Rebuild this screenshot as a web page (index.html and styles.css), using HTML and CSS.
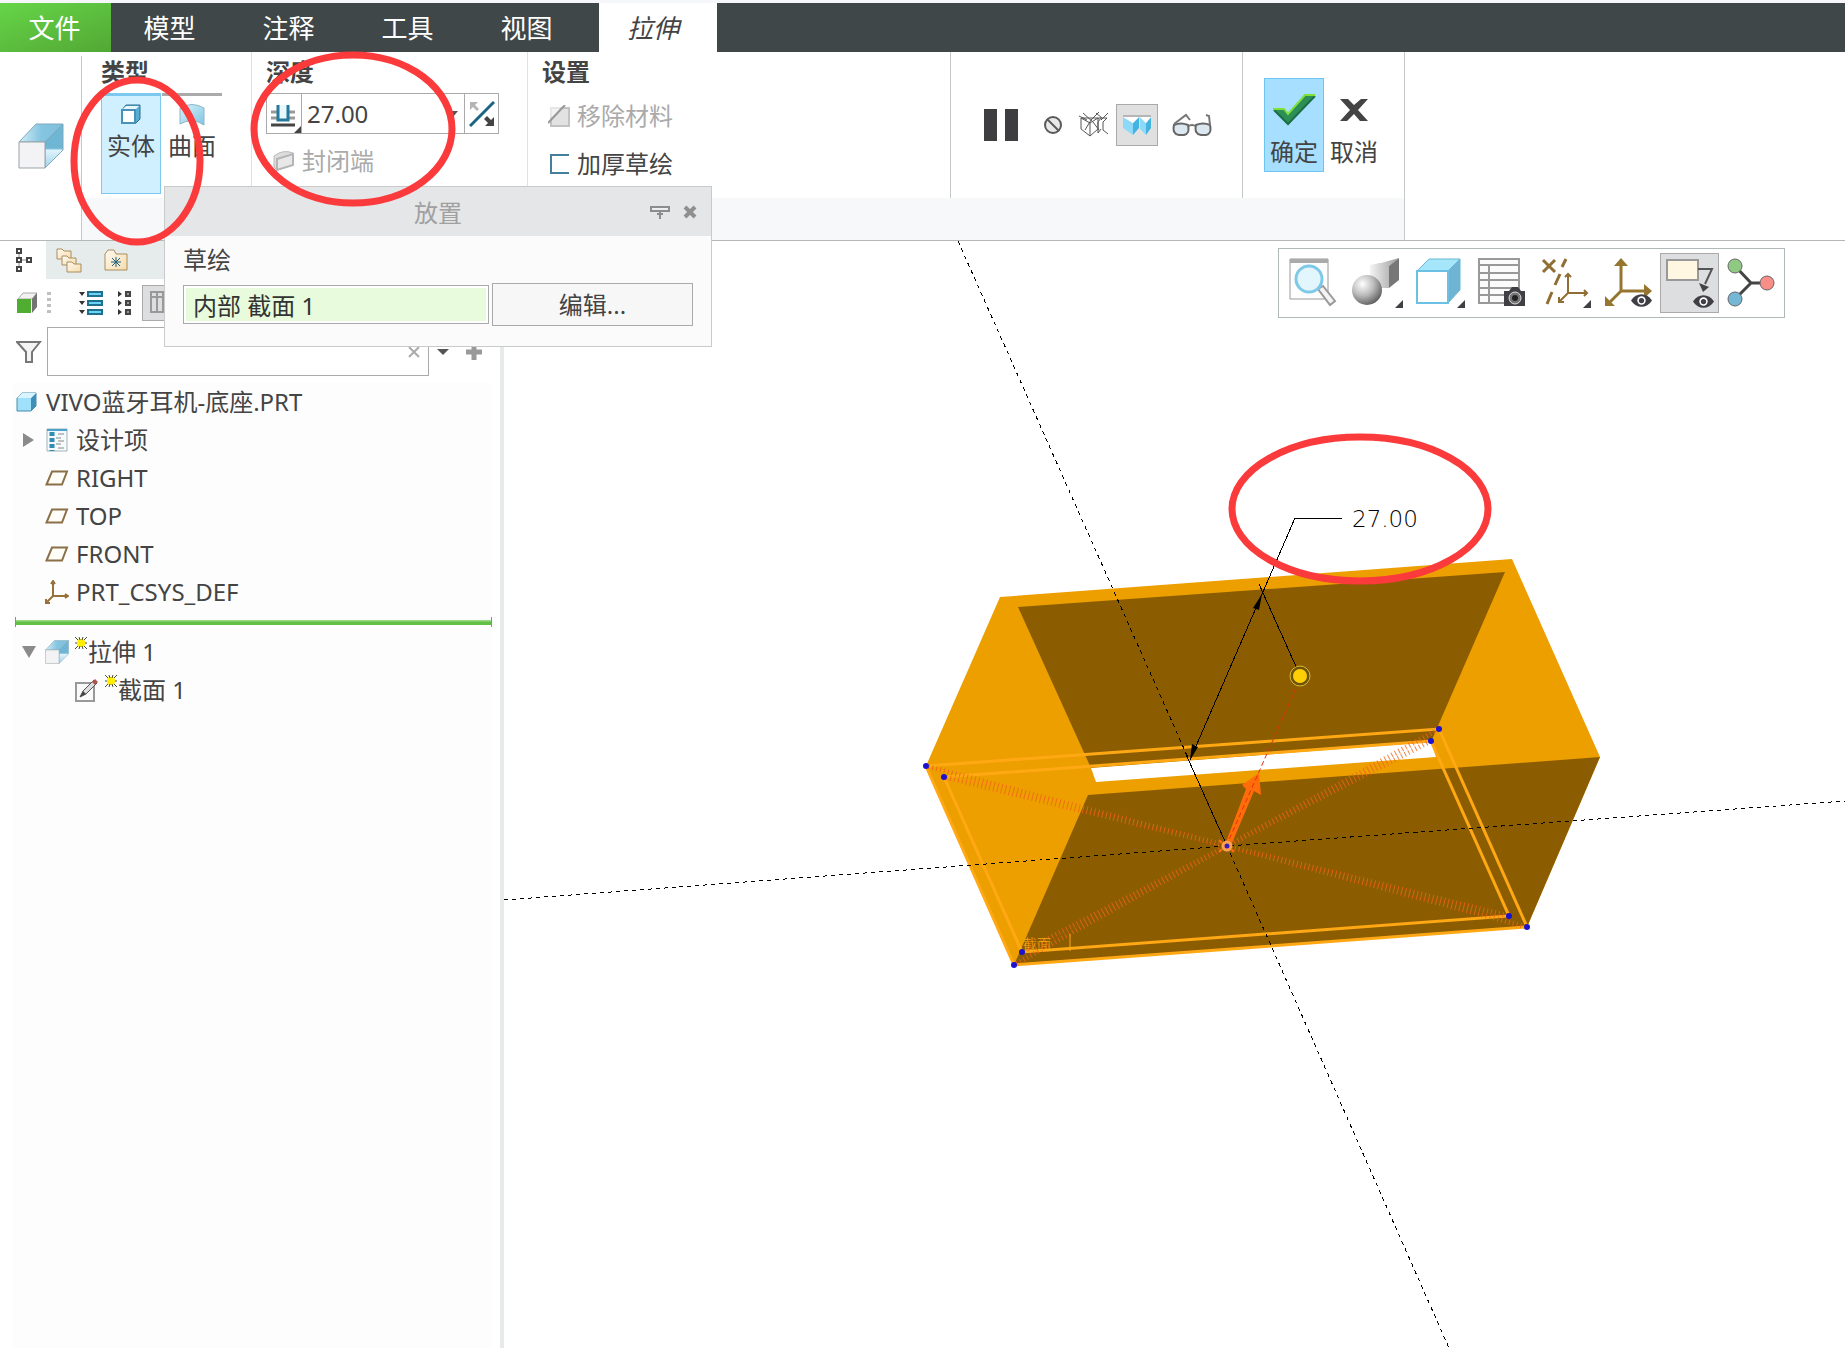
FILE: index.html
```html
<!DOCTYPE html>
<html lang="zh-CN">
<head>
<meta charset="utf-8">
<meta name="viewport" content="width=device-width, initial-scale=1">
<title>VIVO蓝牙耳机-底座.PRT</title>
<link rel="stylesheet" href="styles.css">
</head>
<body>
<svg class="defs" aria-hidden="true">
  <defs>
    <linearGradient id="gBlue" x1="0" y1="0" x2="1" y2="1"><stop offset="0" stop-color="#d9f3fd"/><stop offset="1" stop-color="#7fc4e2"/></linearGradient>
    <linearGradient id="gFolder" x1="0" y1="0" x2="1" y2="1"><stop offset="0" stop-color="#fffaf0"/><stop offset="1" stop-color="#f6dcae"/></linearGradient>
    <linearGradient id="gTop" x1="0" y1="0" x2="1" y2="0"><stop offset="0" stop-color="#d3edf7"/><stop offset=".5" stop-color="#86c5e0"/><stop offset="1" stop-color="#7fc0dc"/></linearGradient>
    <linearGradient id="gSide" x1="0" y1="0" x2="0" y2="1"><stop offset="0" stop-color="#6fb6d5"/><stop offset=".55" stop-color="#6fb6d5"/><stop offset=".6" stop-color="#dff3fb"/><stop offset="1" stop-color="#9fd3ea"/></linearGradient>
    <radialGradient id="gBall" cx=".35" cy=".3" r=".75"><stop offset="0" stop-color="#fff"/><stop offset=".5" stop-color="#bcbcbc"/><stop offset="1" stop-color="#5c5c5c"/></radialGradient>
    <linearGradient id="gGrey" x1="0" y1="0" x2="1" y2="0"><stop offset="0" stop-color="#f4f4f4"/><stop offset="1" stop-color="#9a9a9a"/></linearGradient>
    <symbol id="extrude" viewBox="0 0 46 46">
      <path d="M1 19 18 1H45L27 19Z" fill="url(#gTop)" stroke="#7fa9bb"/>
      <path d="M45 1V27L27 45V19Z" fill="url(#gSide)" stroke="#7fa9bb"/>
      <path d="M1 19H27V45H1Z" fill="#f3f3f5" stroke="#9aa3a8"/>
    </symbol>
    <symbol id="spark" viewBox="0 0 12 12">
      <path d="M3 3 9 9M9 3 3 9M6 2V10M2 6H10" stroke="#ffee00" stroke-width="3"/>
      <path d="M0 0 3 3M12 0 9 3M0 12 3 9M12 12 9 9M4 0 5 3M8 0 7 3M4 12 5 9M8 12 7 9M0 6H2M10 6H12" stroke="#4a4a30"/>
    </symbol>
    <symbol id="plane" viewBox="0 0 24 16">
      <path d="M7 1.500H22L17 14.500H1.500Z" fill="#fffdf8" stroke="#8b6f47" stroke-width="2"/>
    </symbol>
    <symbol id="eye" viewBox="0 0 20 12">
      <path d="M0 6C5-2 15-2 20 6 15 14 5 14 0 6Z" fill="#3f3f44"/><circle cx="10" cy="6" r="4" fill="#fff"/><circle cx="10" cy="6" r="2.500" fill="#3f3f44"/>
    </symbol>
  </defs>
</svg>

<nav class="tabs">
  <button class="tab file">文件</button>
  <button class="tab">模型</button>
  <button class="tab">注释</button>
  <button class="tab">工具</button>
  <button class="tab">视图</button>
  <button class="tab active">拉伸</button>
</nav>

<header class="ribbon">
  <div class="feature"><svg width="46" height="46"><use href="#extrude"/></svg></div>
  <div class="panel">
    <div class="groups">
      <section class="group type">
        <h2>类型</h2>
        <div class="choices">
          <button class="choice on">
            <svg width="22" height="20"><path d="M2 6 6 1H20V15L16 19H2Z" fill="#58aed4" stroke="#2c6f92"/><path d="M2 6 6 2H19L15 6Z" fill="#e8f7fd"/><path d="M2 6H15V19H2Z" fill="#fff" stroke="#4792b6" stroke-width="2"/></svg>
            实体
          </button>
          <button class="choice">
            <svg width="26" height="22"><path d="M1 4Q13-3 25 4V21Q13 13 1 20Z" fill="url(#gBlue)" stroke="#8cb6c6"/></svg>
            曲面
          </button>
        </div>
      </section>
      <section class="group depth">
        <h2>深度</h2>
        <div class="combo">
          <button class="mode" aria-label="深度选项"><svg width="34" height="38"><path d="M4 17H28M4 23H28" stroke="#9a9a9a" stroke-width="3"/><path d="M11 10V25H21V10" fill="#e8f8fd" stroke="#25799c" stroke-width="3"/><path d="M4 30H28" stroke="#444" stroke-width="3"/><path d="M34 31V38H27Z" fill="#444"/></svg></button>
          <input type="text" value="27.00" aria-label="深度">
          <button class="drop" aria-label="下拉"><svg width="10" height="6"><path d="M0 0H10L5 6Z" fill="#555"/></svg></button>
          <button class="flip" aria-label="反向"><svg width="26" height="26"><path d="M1 25 25 1" stroke="#1c6483" stroke-width="3"/><path d="M1 1H9L6 4 10 8 8 10 4 6 1 9Z" fill="#b5b5b5"/><path d="M25 25H16L19 22 15 18 18 15 22 19 25 16Z" fill="#444"/></svg></button>
        </div>
        <button class="line muted cap"><svg width="22" height="22"><path d="M1 6Q10-1 20 3V15L4 20 1 17Z" fill="#ddd" stroke="#bbb"/><path d="M4 9 20 4V15L4 20Z" fill="#e8e8e8" stroke="#b5b5b5" stroke-width="2"/></svg>封闭端</button>
      </section>
      <section class="group settings">
        <h2>设置</h2>
        <button class="line muted remove"><svg width="22" height="22"><path d="M3 3H21V21H3Z" fill="#e2e2e2" stroke="#c2c2c2" stroke-width="2"/><path d="M0 0H15L0 16Z" fill="#fff" opacity=".6"/><path d="M0 18 17 0" stroke="#999" stroke-width="2"/></svg>移除材料</button>
        <button class="line thicken"><svg width="22" height="22"><path d="M21 2H3V20H21" fill="none" stroke="#457f9e" stroke-width="2"/></svg>加厚草绘</button>
      </section>
      <section class="group tools">
        <button aria-label="暂停"><svg width="36" height="32"><path d="M1 0H14V32H1ZM22 0H35V32H22Z" fill="#3e3e40"/></svg></button>
        <button aria-label="无预览"><svg width="20" height="20"><circle cx="10" cy="10" r="8" fill="#e9e9e9" stroke="#5a5a5a" stroke-width="2"/><path d="M4 4 16 16" stroke="#5a5a5a" stroke-width="2"/></svg></button>
        <button aria-label="分离"><svg width="30" height="26"><path d="M2 6 11 11 11 24 2 17ZM11 11 19 6V17L11 24M2 6H28M22 6 19 10V21L22 17M0 4 8 8M20 0 12 8 6 18M4 1 14 10 20 18M28 6 24 10V18L29 22M17 1 23 6M29 1 22 8" fill="none" stroke="#555"/></svg></button>
        <button class="pressed" aria-label="已附加"><svg width="30" height="22"><path d="M1 3 11 9V21L1 14Z" fill="#8ddaf8"/><path d="M11 9 17 3V14L11 21Z" fill="#45b3df"/><path d="M1 3H17L11 9Z" fill="#fff"/><path d="M18 3 24 9V21L18 15Z" fill="#8ddaf8"/><path d="M24 9 29 3V14L24 21Z" fill="#45b3df"/><path d="M18 3H29L24 9Z" fill="#fff"/><path d="M1 2H29" stroke="#8b8b8b"/></svg></button>
        <button aria-label="预览"><svg width="40" height="24"><path d="M2 12Q9 9 16 12 18 21 12 22H7Q0 21 2 12ZM24 12Q31 9 38 12 40 21 34 22H29Q22 21 24 12Z" fill="#dce8ef" stroke="#666" stroke-width="2"/><path d="M17 13Q20 11 23 13M2 11 14 2 18 7M38 12 37 3 34 2" fill="none" stroke="#777" stroke-width="2"/></svg></button>
      </section>
      <section class="group confirm">
        <button class="ok"><svg width="44" height="32"><path d="M1 15H12L16 20 33 1H43L16 31Z" fill="#2c8f55"/><path d="M2 16 16 30 43 2" fill="none" stroke="#1d6e46" stroke-width="2"/><path d="M1 15H12L16 20 33 1H43" fill="none" stroke="#7fe03a" stroke-width="2"/></svg>确定</button>
        <button class="cancel"><svg width="30" height="32"><path d="M1 5H9L15 11 22 5H29L19 16 29 27H21L15 20 8 27H1L11 16Z" fill="#444"/></svg>取消</button>
      </section>
    </div>
  </div>

  <svg class="marks" width="470" height="250" aria-hidden="true">
    <ellipse cx="137" cy="161" rx="63" ry="81"/>
    <ellipse cx="353" cy="129" rx="99" ry="74"/>
  </svg>

  <section class="placement">
    <div class="title"><h3>放置</h3>
      <button aria-label="固定"><svg width="20" height="16"><path d="M1 3H19V7H1Z" fill="#eee" stroke="#8d8d8d" stroke-width="2"/><path d="M10 7V15M7 10H13" stroke="#8d8d8d" stroke-width="2"/></svg></button>
      <button aria-label="关闭"><svg width="14" height="14"><path d="M2 2 12 12M12 2 2 12" stroke="#8f8f8f" stroke-width="4"/></svg></button>
    </div>
    <div class="content">
      <label for="sketch">草绘</label>
      <div class="pick"><input id="sketch" type="text" value="内部 截面 1" readonly><button>编辑...</button></div>
    </div>
  </section>
</header>

<div class="workspace">
  <aside class="sidebar">
    <div class="side-tabs">
      <button class="here" aria-label="模型树"><svg width="18" height="26"><path d="M2 2H6V6H2ZM2 11H6V15H2ZM2 20H6V24H2ZM12 11H16V15H12Z" fill="none" stroke="#444" stroke-width="2"/><path d="M4 7V10M4 16V19M7 13H11" stroke="#888"/></svg></button>
      <button aria-label="文件夹"><svg width="26" height="26"><g fill="url(#gFolder)" stroke="#a98d5d"><path d="M1 4V2H6L8 4H15V12H1Z"/><path d="M6 11V9H11L13 11H20V18H6Z"/><path d="M11 17V15H16L18 17H25V25H11Z"/></g></svg></button>
      <button aria-label="收藏夹"><svg width="24" height="24"><path d="M1 6 4 2H10L12 6H23V22H1Z" fill="url(#gFolder)" stroke="#a98d5d"/><path d="M12 9V19M7 14H17M8 10 16 18M16 10 8 18" stroke="#1e5f7e"/></svg></button>
    </div>
    <div class="side-tools">
      <button aria-label="显示"><svg width="20" height="22"><path d="M1 7 6 1H20L15 7Z" fill="#f2f2f2" stroke="#aaa"/><path d="M15 7 20 1V15L15 21Z" fill="#747474"/><path d="M0 7H14V21H0Z" fill="#4fae32"/></svg></button>
      <svg width="4" height="24"><path d="M2 1V24" stroke="#c0c0c0" stroke-width="4" stroke-dasharray="3 3"/></svg>
      <button aria-label="全部展开"><svg width="24" height="26"><path d="M0 2H6L3 6ZM0 11H6L3 15ZM0 20H6L3 24Z" fill="#333"/><path d="M9 2H23V6H9ZM9 11H23V15H9ZM9 20H23V24H9Z" fill="#6bd3f5" stroke="#1f708f" stroke-width="2"/></svg></button>
      <button aria-label="全部折叠"><svg width="14" height="26"><path d="M0 1 4 4 0 7ZM0 10 4 13 0 16ZM0 19 4 22 0 25Z" fill="#333"/><path d="M8 2H12V6H8ZM8 11H12V15H8ZM8 20H12V24H8Z" fill="#999" stroke="#444" stroke-width="2"/></svg></button>
      <button class="columns" aria-label="树列"><svg width="24" height="24"><path d="M1 1H23V21H1ZM1 6H23M7 1V21M13 1V21" fill="none" stroke="#999" stroke-width="2"/></svg></button>
    </div>
    <div class="filter">
      <svg width="26" height="24"><path d="M1 2H24L16 12V22H10V12Z" fill="#f4f4f4" stroke="#777" stroke-width="2"/></svg>
      <div class="search"><input type="text" aria-label="过滤"><button aria-label="清除"><svg width="12" height="12"><path d="M1 1 11 11M11 1 1 11" stroke="#aaa" stroke-width="2"/></svg></button></div>
      <button aria-label="选项"><svg width="12" height="6"><path d="M0 0H12L6 6Z" fill="#555"/></svg></button>
      <button aria-label="添加"><svg width="18" height="18"><path d="M9 1V17M1 9H17" stroke="#999" stroke-width="5"/></svg></button>
    </div>
    <div class="tree">
      <ul>
        <li class="l0"><svg width="22" height="20"><path d="M1 6 6 1H20V14L15 19H1Z" fill="#9fe0fa" stroke="#4b8cab"/><path d="M15 6 20 1V14L15 19Z" fill="#3d8fb8"/><path d="M1 6 6 1H20L15 6Z" fill="#d8f4fe"/></svg>VIVO蓝牙耳机-底座.PRT</li>
        <li class="l1"><svg class="arrow" width="12" height="14"><path d="M1 0 12 7 1 14Z" fill="#8b8b8b"/></svg><svg width="24" height="24"><path d="M2 1H22V23H2Z" fill="#f5fafc" stroke="#a5b2b8"/><path d="M2 2H22" stroke="#4ba3cc" stroke-width="2"/><path d="M7 4V23" stroke="#2f8db8" stroke-width="5" stroke-dasharray="4 2"/><path d="M13 6H19M11 10H16M13 13H19M11 16H16M13 20H19" stroke="#888"/></svg>设计项</li>
        <li class="l1"><svg width="24" height="16"><use href="#plane"/></svg>RIGHT</li>
        <li class="l1"><svg width="24" height="16"><use href="#plane"/></svg>TOP</li>
        <li class="l1"><svg width="24" height="16"><use href="#plane"/></svg>FRONT</li>
        <li class="l1"><svg width="24" height="24"><path d="M8 2V16H23M8 16 2 22M6 4 8 1 10 4M20 14 23 16 20 18M1 19V23H5" fill="none" stroke="#96713a" stroke-width="2"/></svg>PRT_CSYS_DEF</li>
      </ul>
      <div class="insert"></div>
      <ul>
        <li class="l1"><svg class="arrow" width="14" height="12"><path d="M0 0H14L7 12Z" fill="#8b8b8b"/></svg><svg width="24" height="24"><use href="#extrude"/></svg><svg class="spark" width="12" height="12"><use href="#spark"/></svg>拉伸 1</li>
        <li class="l2"><svg width="24" height="24"><path d="M1 5H19V23H1Z" fill="#fafafa" stroke="#999" stroke-width="2"/><path d="M5 19 8 13 19 2 22 5 11 16Z" fill="#ddd" stroke="#555"/><path d="M17 4 20 1 23 4 20 7Z" fill="#b1554a"/><path d="M5 19 8 13 11 16Z" fill="#444"/></svg><svg class="spark" width="12" height="12"><use href="#spark"/></svg>截面 1</li>
      </ul>
    </div>
  </aside>

  <main class="viewport">
    <svg class="model" viewBox="504 241 1341 1107" role="img" aria-label="拉伸预览">
      <path d="M1000 597 1512 559 1600 757 1527 927 1014 965 926 766Z" fill="#ed9f00"/>
      <path d="M1018 607 1505 572 1431 742 1091 768Z" fill="#8c5d00"/>
      <path d="M1091 768 1431 742 1436 757 1096 782Z" fill="#fff"/>
      <path d="M1088 795 1600 757 1527 927 1014 965Z" fill="#8c5d00"/>
      <g fill="none" stroke="#ffa814" stroke-width="3">
        <path d="M926 766 1439 729 1527 927 1014 965Z"/>
        <path d="M944 777 1431 741 1509 916 1022 952Z"/>
      </g>
      <g stroke="#f0641a" stroke-width="5" stroke-dasharray="1 3" opacity=".8">
        <path d="M1227 846 926 766M1227 846 944 777M1227 846 1439 729M1227 846 1431 741M1227 846 1527 927M1227 846 1509 916M1227 846 1014 965M1227 846 1022 952"/>
      </g>
      <g stroke="#000" fill="none" shape-rendering="crispEdges">
        <path d="M958 241 1189 760M1227 846 1449 1348M504 900 1227 846 1845 801" stroke-dasharray="4 4"/>
        <path d="M1185 752 1227 846M1342 518H1295L1190 760M1259 584 1298 671"/>
      </g>
      <path d="M1262 594 1253 608 1259 610ZM1190 760 1192 744 1198 747Z"/>
      <path d="M1226 842 1246 789 1242 785 1259 773 1261 795 1254 791 1232 843Z" fill="#ff6d0a"/>
      <path d="M1296 688 1228 842" stroke="#e03010" stroke-dasharray="5 3"/>
      <circle cx="1227" cy="846" r="4" fill="#3a20b0" stroke="#ffa050" stroke-width="3"/>
      <path d="M1219 840 1222 843M1219 852 1222 849M1234 852 1231 849" stroke="#ff6d0a" stroke-width="2"/>
      <circle cx="1300" cy="676" r="10" fill="#6d5310" stroke="#d9b928" stroke-width="1"/><circle cx="1300" cy="676" r="7" fill="#ffcf05"/>
      <g fill="#1a12d0"><circle cx="926" cy="766" r="3"/><circle cx="944" cy="777" r="3"/><circle cx="1439" cy="729" r="3"/><circle cx="1431" cy="741" r="3"/><circle cx="1527" cy="927" r="3"/><circle cx="1509" cy="916" r="3"/><circle cx="1014" cy="965" r="3"/><circle cx="1022" cy="952" r="3"/></g>
      <text class="section-name" x="1023" y="949">截面</text><path d="M1070 934V951" stroke="#ffa814"/>
      <text class="dimension" x="1352" y="527">27.00</text>
      <ellipse cx="1360" cy="509" rx="128" ry="72" fill="none" stroke="#fb3a3c" stroke-width="7"/>
    </svg>
    <div class="view-tools">
      <button aria-label="重新调整"><svg width="48" height="50"><path d="M1 1H39V41H1Z" fill="#fdfdfd" stroke="#999"/><path d="M1 3H39" stroke="#aaa" stroke-width="4"/><path d="M29 31 34 28 46 43 41 47Z" fill="#f4f4f4" stroke="#999" stroke-width="2"/><circle cx="20" cy="21" r="13" fill="#e3f6fd" stroke="#7fc9e8" stroke-width="3"/></svg></button>
      <button aria-label="渲染"><svg width="52" height="52"><path d="M18 9 28 6 37 9V31H18Z" fill="#ccc"/><path d="M18 8 29 6 47 1 37 9V31H18Z" fill="url(#gGrey)"/><path d="M37 9 47 1V23L37 31Z" fill="#777"/><circle cx="15" cy="33" r="15" fill="url(#gBall)"/><path d="M51 43V51H43Z" fill="#3f3f44"/></svg></button>
      <button aria-label="显示样式"><svg width="52" height="52"><path d="M2 14 14 2H45L33 14Z" fill="#a5e6fb" stroke="#6bb7d4"/><path d="M33 14 45 2V33L33 46Z" fill="#6fb4d2" stroke="#6bb7d4"/><path d="M2 14H33V46H2Z" fill="#fff" stroke="#6bc1e4" stroke-width="2"/><path d="M50 43V51H42Z" fill="#3f3f44"/></svg></button>
      <button aria-label="视图管理器"><svg width="48" height="50"><path d="M1 1H41V45H1ZM1 7H41M1 15H41M1 22H41M1 30H41M1 37H41M11 7V45" fill="#fbfbfc" stroke="#999" stroke-width="2"/><path d="M26 33H31L34 29H40L43 33H47V48H26Z" fill="#3f3f44"/><circle cx="37" cy="40" r="6" fill="#777" stroke="#ddd"/><circle cx="37" cy="40" r="3" fill="#222"/></svg></button>
      <button aria-label="基准显示"><svg width="52" height="52"><g fill="none" stroke="#8f6d33" stroke-width="3"><path d="M2 3 14 15M14 3 2 15M25 2 21 10M19 17 14 28M11 35 6 47"/><path d="M27 17V36H46M27 36 18 45M24 20 27 17 30 20M43 33 46 36 43 39M18 40V45H23" stroke-width="2"/></g><path d="M50 43V51H42Z" fill="#3f3f44"/></svg></button>
      <button aria-label="坐标系"><svg width="50" height="50"><path d="M17 6V33H42M17 33 5 45" fill="none" stroke="#96762f" stroke-width="3"/><path d="M10 8 17 0 24 8ZM40 26 48 33 40 40ZM1 38V48H11Z" fill="#96762f"/><use href="#eye" x="27" y="36" width="21" height="13"/></svg></button>
      <button class="pressed" aria-label="注释显示"><svg width="50" height="50"><path d="M2 2H33V22H2Z" fill="#fff7e2" stroke="#999" stroke-width="2"/><path d="M33 11H47L40 26" fill="none" stroke="#555" stroke-width="2"/><path d="M34 25 44 29 38 34Z" fill="#444"/><use href="#eye" x="28" y="37" width="21" height="13"/></svg></button>
      <button aria-label="旋转中心"><svg width="48" height="50"><path d="M8 8 24 25 8 41M24 25H40" fill="none" stroke="#444" stroke-width="3"/><g stroke="#666"><circle cx="8" cy="8" r="7" fill="#8fca83"/><circle cx="40" cy="25" r="7" fill="#f88e87"/><circle cx="8" cy="41" r="7" fill="#75b8d6"/></g></svg></button>
    </div>
  </main>
</div>
</body>
</html>
```

FILE: styles.css
```css
* { box-sizing: border-box; }
body {
  margin: 0;
  min-height: 100vh;
  display: flex;
  flex-direction: column;
  background: #fff;
  color: #444;
  font: 400 24px/32px "Noto Sans", "Noto Sans CJK SC", sans-serif;
}
svg { display: block; flex: none; }
h2, h3, ul { margin: 0; padding: 0; }
button, input { font: inherit; color: inherit; margin: 0; padding: 0; border: 0; background: none; border-radius: 0; }
.defs { position: absolute; width: 0; height: 0; }

/* Tab bar */
.tabs { display: flex; height: 52px; border-top: 3px solid #f5f7fa; background: #3f4748; }
.tab { width: 119px; padding: 1px 2px 0 0; color: #fff; font-size: 26px; }
.file { width: 111px; background: linear-gradient(160deg, #66d548, #52a834); }
.active { margin-left: 12px; width: 118px; padding-right: 10px; background: #fff; color: #444; font-style: italic; }

/* Ribbon */
.ribbon { position: relative; display: flex; height: 189px; border-bottom: 1px solid #b4b8b9; }
.feature { display: flex; justify-content: center; align-items: center; width: 82px; margin-top: 4px; border-right: 1px solid #c4c8c9; }
.feature svg { margin-bottom: 4px; }
.panel { background: #f6f8fa; border-right: 1px solid #c4c8c9; }
.groups { display: flex; height: 146px; background: #fff; }
.group { display: flex; flex-direction: column; padding: 4px 0 0 14px; border-right: 1px solid #dfe2e3; }
.group h2 { font-size: 24px; line-height: 32px; }
.type { width: 170px; padding-left: 19px; }
.depth { width: 276px; }
.settings { width: 423px; }
.choices { display: flex; gap: 1px; margin-top: 5px; }
.choice { display: flex; flex-direction: column; align-items: center; gap: 4px; width: 60px; height: 101px; padding-top: 8px; border-top: 3px solid #aaa; white-space: nowrap; }
.choice svg { height: 22px; }
.choice.on { border: 1px solid #7cc8ee; border-top: 3px solid #7cc8ee; background: #d0f0ff; }
.combo { display: flex; width: 233px; height: 41px; margin-top: 5px; border: 1px solid #aaa; }
.mode { width: 35px; border-right: 1px solid #aaa; }
.combo input { flex: 1; min-width: 0; padding-left: 5px; }
.drop { width: 16px; }
.flip { width: 34px; padding-left: 4px; border-left: 1px solid #aaa; }
.line { display: flex; align-items: center; gap: 7px; height: 32px; }
.muted { color: #aaa; }
.cap { margin: 11px 0 0 7px; }
.remove { margin: 12px 0 0 6px; }
.thicken { margin: 16px 0 0 6px; }
.tools { flex-direction: row; align-items: center; width: 292px; padding: 0 0 0 32px; gap: 25px; border-color: #c4c8c9; }
.tools button + button { margin-left: -9px; }
.tools button:nth-child(2) { margin-left: -1px; }
.tools .pressed { display: grid; place-items: center; width: 42px; height: 42px; margin: 0 -2px 0 -18px; border: 1px solid #a9a9a9; background: #e0e0e0; }
.settings { border-color: #c4c8c9; }
.confirm { flex-direction: row; width: 161px; padding: 26px 0 0 21px; border: 0; }
.confirm button { display: flex; flex-direction: column; align-items: center; gap: 10px; width: 60px; height: 94px; padding-top: 16px; white-space: nowrap; }
.confirm .ok { padding-top: 15px; border: 1px solid #6cc5f2; background: #a6dfff; }

/* Hand-drawn highlight rings over the ribbon */
.marks { position: absolute; left: 0; top: -52px; z-index: 3; pointer-events: none; fill: none; stroke: #fb3a3c; stroke-width: 7px; }

/* Placement panel */
.placement { position: absolute; left: 164px; top: 134px; z-index: 2; width: 548px; border: 1px solid #c8cacb; background: #fbfbfb; }
.title { display: flex; align-items: center; gap: 13px; height: 49px; padding-right: 14px; background: #e5e6e8; color: #a0a0a0; }
.title h3 { flex: 1; padding: 2px 0 0 74px; text-align: center; font-size: 24px; font-weight: inherit; }
.content { padding: 8px 18px 20px 18px; }
.content label { display: block; }
.pick { display: flex; align-items: center; gap: 3px; margin-top: 7px; }
.pick input { width: 306px; height: 39px; padding: 0 9px; border: 1px solid #aaa; background: #e8fbdc; box-shadow: inset 0 0 0 2px #fff; color: #333; }
.pick button { flex: 1; height: 43px; border: 1px solid #aaa; background: #f7f7f8; }

/* Workspace */
.workspace { display: flex; flex: 1; }
.sidebar { display: flex; flex-direction: column; width: 504px; flex: none; border-right: 4px solid #e6eaeb; }
.side-tabs { display: flex; height: 38px; background: #e6ebec; }
.side-tabs button { padding: 0 0 0 10px; }
.side-tabs .here { width: 46px; padding-left: 15px; background: #fff; }
.side-tabs button:last-child { padding-left: 22px; }
.side-tools { display: flex; align-items: center; height: 48px; padding-left: 17px; gap: 10px; }
.side-tools button:nth-of-type(2) { margin-left: 18px; }
.side-tools button:nth-of-type(3) { margin-left: 5px; }
.side-tools .columns { width: 40px; height: 36px; padding-left: 7px; border: 1px solid #aaa; background: #dcdedf; }
.filter { display: flex; align-items: center; gap: 14px; height: 49px; padding-left: 16px; }
.search { display: flex; align-items: center; width: 382px; height: 49px; padding-right: 8px; margin: 0 -6px 0 -9px; border: 1px solid #aaa; background: #fff; }
.search input { flex: 1; min-width: 0; height: 100%; padding: 0 8px; }
.filter > button:last-child { margin-left: 2px; }
.tree { flex: 1; margin: 7px 8px 0 13px; background: #fdfdfd; }
.tree ul { list-style: none; }
.tree li { position: relative; display: flex; align-items: center; gap: 7px; height: 38px; white-space: nowrap; }
.tree .l0 { gap: 8px; padding-left: 3px; }
.l1 { padding-left: 32px; }
.l2 { padding-left: 62px; }
.arrow { position: absolute; left: 9px; }
.spark { margin: -18px -6px 0 -1px; }
.insert { height: 10px; margin: 6px 0 6px 2px; border: solid #5fae4a; border-width: 0 1px; background: linear-gradient(#a5e093, #62c046 50%) center / 100% 5px no-repeat; }

.viewport { position: relative; flex: 1; min-width: 0; overflow: hidden; }
.model { width: 100%; height: auto; }
.dimension { font: 200 23px "DejaVu Sans", sans-serif; fill: #000; }
.section-name { font: 300 14px "Noto Sans CJK SC", sans-serif; fill: #ffa814; }
.view-tools { position: absolute; right: 60px; top: 7px; display: flex; align-items: center; width: 507px; height: 70px; padding-left: 10px; border: 1px solid #b0b8ba; background: #fff; }
.view-tools button { flex: none; width: 63px; }
.view-tools .pressed { display: grid; place-items: center; width: 59px; height: 60px; margin: 0 8px 0 -7px; border: 1px solid #aaa; background: #dcdedf; }
```
